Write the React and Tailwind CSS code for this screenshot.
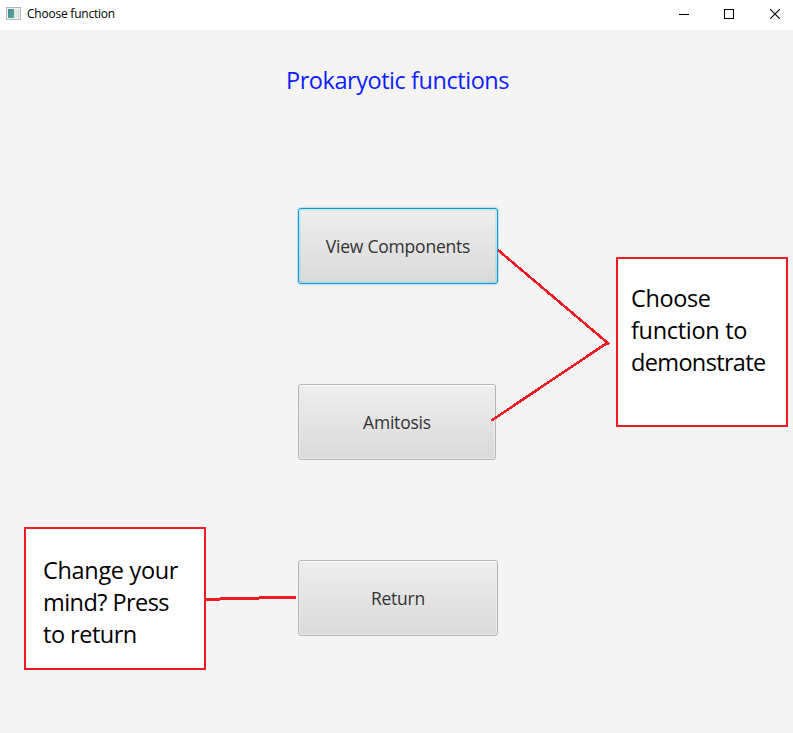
import React from "react";

const buttonBase =
  "flex h-[76px] items-center justify-center rounded-[3px] border bg-linear-to-b from-[#efefef] to-[#d9d9d9] text-[17.5px] leading-6 font-[370] tracking-[-0.22px] text-[#333333]";

function TitleBar() {
  return (
    <header className="flex h-[30px] shrink-0 items-center justify-between bg-white text-black">
      <div className="flex items-center gap-[6px] pb-[3px] pl-[6px]">
        <svg width="15" height="13" viewBox="0 0 15 13" shapeRendering="crispEdges">
          <defs>
            <linearGradient id="pane" x1="0" y1="0" x2="1" y2="1">
              <stop offset="0" stopColor="#4d7fa6" />
              <stop offset="1" stopColor="#54b487" />
            </linearGradient>
          </defs>
          <rect x="0.5" y="0.5" width="14" height="12" fill="#f2f2f2" stroke="#b4b8bd" />
          <rect x="2" y="2" width="6" height="9" fill="url(#pane)" />
          <rect x="8" y="2" width="3" height="9" fill="#dfe5e7" />
          <rect x="12" y="2" width="1" height="9" fill="#ccd4d8" />
        </svg>
        <span className="pt-px text-[12px] leading-4 tracking-[-0.23px]">Choose function</span>
      </div>
      <div className="flex items-center pr-[13px] pb-[2px]">
        <svg className="mr-[35px]" width="10" height="10" viewBox="0 0 10 10" shapeRendering="crispEdges">
          <path d="M0 5.5H10" stroke="#000" />
        </svg>
        <svg className="mr-9" width="10" height="10" viewBox="0 0 10 10" shapeRendering="crispEdges">
          <rect x="0.5" y="0.5" width="9" height="9" fill="none" stroke="#000" />
        </svg>
        <svg width="10" height="10" viewBox="0 0 10 10">
          <path d="M0 0L10 10M10 0L0 10" stroke="#000" strokeWidth="1.1" />
        </svg>
      </div>
    </header>
  );
}

export default function App() {
  return (
    <div className="relative flex h-[733px] w-[793px] flex-col overflow-hidden bg-[#f4f4f4] font-['Open_Sans','Noto_Sans',sans-serif]">
      <TitleBar />
      <main className="flex flex-col pl-[286px]">
        <h1 className="mt-[34px] h-8 text-[23.5px] leading-8 font-[370] tracking-[-0.45px] whitespace-nowrap text-[#0d1dff]">
          Prokaryotic functions
        </h1>
        <div className="mt-28 flex flex-col items-start gap-[100px] pl-3">
          <button className={`${buttonBase} w-[200px] border-[#039ed3] shadow-[0_0_1px_1px_#b5e1f0,inset_0_0_0_2px_rgba(3,158,211,0.1)]`}>
            <span>View Components</span>
          </button>
          <button className={`${buttonBase} w-[198px] border-[#b5b5b5] shadow-[inset_0_1px_0_#fcfcfc,inset_0_0_0_1px_#ececec]`}>
            <span>Amitosis</span>
          </button>
          <button className={`${buttonBase} w-[200px] border-[#b5b5b5] shadow-[inset_0_1px_0_#fcfcfc,inset_0_0_0_1px_#ececec]`}>
            <span>Return</span>
          </button>
        </div>
      </main>

      {/* Annotations laid over the window */}
      <aside className="absolute top-[257px] left-[616px] h-[170px] w-[172px] border-2 border-[#ed1c24] bg-white pt-[23px] pl-[13px] text-[23.5px] leading-8 font-[370] tracking-[-0.4px] whitespace-nowrap text-black">
        <p>Choose</p>
        <p className="tracking-[-0.3px]">function to</p>
        <p className="tracking-[-0.65px]">demonstrate</p>
      </aside>
      <aside className="absolute top-[527px] left-[24px] h-[143px] w-[182px] border-2 border-[#ed1c24] bg-white pt-[25px] pl-[17px] text-[23.5px] leading-8 font-[370] tracking-[-0.32px] whitespace-nowrap text-black">
        <p>Change your</p>
        <p className="tracking-[-0.55px]">mind? Press</p>
        <p className="tracking-[-0.5px]">to return</p>
      </aside>
      <svg
        className="pointer-events-none absolute inset-0"
        width="793"
        height="733"
        viewBox="0 0 793 733"
        fill="none"
        stroke="#ed1c24"
        shapeRendering="crispEdges"
      >
        <path d="M498 250L609.500 344.500" strokeWidth="2.6" />
        <path d="M491.500 420.500L607 343" strokeWidth="2.6" />
        <path d="M205 599.500H220M220 598.500H259M259 597.500H296" strokeWidth="3" />
      </svg>
    </div>
  );
}
